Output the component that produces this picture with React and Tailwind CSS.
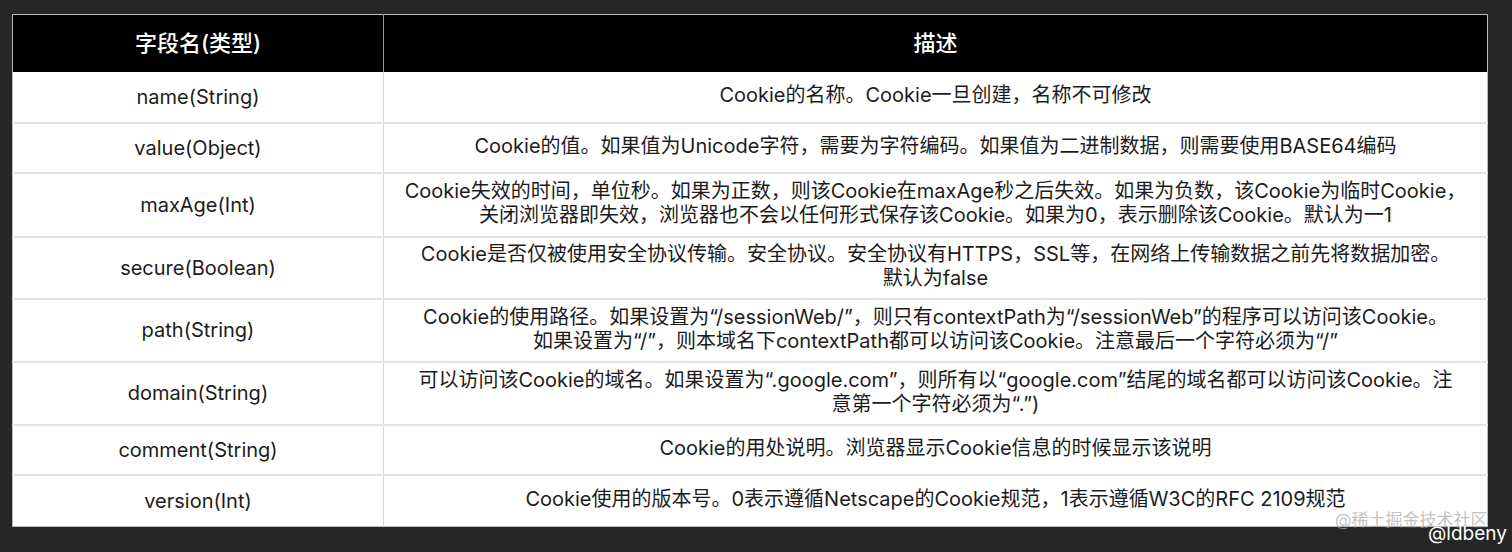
import React from "react";

const rows = [
  { name: "name(String)", h: "h-[51px]", desc: ["Cookie的名称。Cookie一旦创建，名称不可修改"] },
  { name: "value(Object)", h: "h-[50px]", desc: ["Cookie的值。如果值为Unicode字符，需要为字符编码。如果值为二进制数据，则需要使用BASE64编码"] },
  {
    name: "maxAge(Int)",
    h: "h-[64px]",
    desc: [
      "Cookie失效的时间，单位秒。如果为正数，则该Cookie在maxAge秒之后失效。如果为负数，该Cookie为临时Cookie，",
      "关闭浏览器即失效，浏览器也不会以任何形式保存该Cookie。如果为0，表示删除该Cookie。默认为一1",
    ],
  },
  {
    name: "secure(Boolean)",
    h: "h-[62px]",
    desc: [
      "Cookie是否仅被使用安全协议传输。安全协议。安全协议有HTTPS，SSL等，在网络上传输数据之前先将数据加密。",
      "默认为false",
    ],
  },
  {
    name: "path(String)",
    h: "h-[63px]",
    desc: [
      "Cookie的使用路径。如果设置为“/sessionWeb/”，则只有contextPath为“/sessionWeb”的程序可以访问该Cookie。",
      "如果设置为“/”，则本域名下contextPath都可以访问该Cookie。注意最后一个字符必须为“/”",
    ],
  },
  {
    name: "domain(String)",
    h: "h-[63px]",
    desc: [
      "可以访问该Cookie的域名。如果设置为“.google.com”，则所有以“google.com”结尾的域名都可以访问该Cookie。注",
      "意第一个字符必须为“.”)",
    ],
  },
  { name: "comment(String)", h: "h-[50px]", desc: ["Cookie的用处说明。浏览器显示Cookie信息的时候显示该说明"] },
  { name: "version(Int)", h: "h-[52px]", desc: ["Cookie使用的版本号。0表示遵循Netscape的Cookie规范，1表示遵循W3C的RFC 2109规范"] },
];

export default function App() {
  return (
    <div className="relative w-[1512px] h-[552px] overflow-hidden bg-[#262626] pt-[14px] pl-[12px] font-['Inter','Noto_Sans_CJK_SC',sans-serif]">
      <table className="w-[1476px] border-collapse border border-[#b9b9b9] table-fixed">
        <colgroup>
          <col className="w-[371px]" />
          <col />
        </colgroup>
        <thead>
          <tr className="h-[57px] bg-black text-white">
            <th className="border-r border-[#9a9a9a] text-[22px] font-medium">字段名(类型)</th>
            <th className="text-[22px] font-medium">描述</th>
          </tr>
        </thead>
        <tbody>
          {rows.map((r) => (
            <tr key={r.name} className={`${r.h} bg-white border-b-2 border-[#e4e4e4] last:border-b-0`}>
              <td className="border-r border-[#d6d6d6] text-center text-[20px] text-[#1c1c1c]">{r.name}</td>
              <td className="px-[3px] pb-[3px] text-center text-[20px] leading-[24px] text-[#1c1c1c]">
                {r.desc.map((line, i) => (
                  <div key={i} className="whitespace-nowrap">{line}</div>
                ))}
              </td>
            </tr>
          ))}
        </tbody>
      </table>

      <div className="absolute left-[1335px] top-[508px] text-[17px] text-[#a8a8a8]/70 whitespace-nowrap">@稀土掘金技术社区</div>
      <div className="absolute left-[1428px] top-[520px] text-[19px] text-white whitespace-nowrap">@ldbeny</div>
    </div>
  );
}
